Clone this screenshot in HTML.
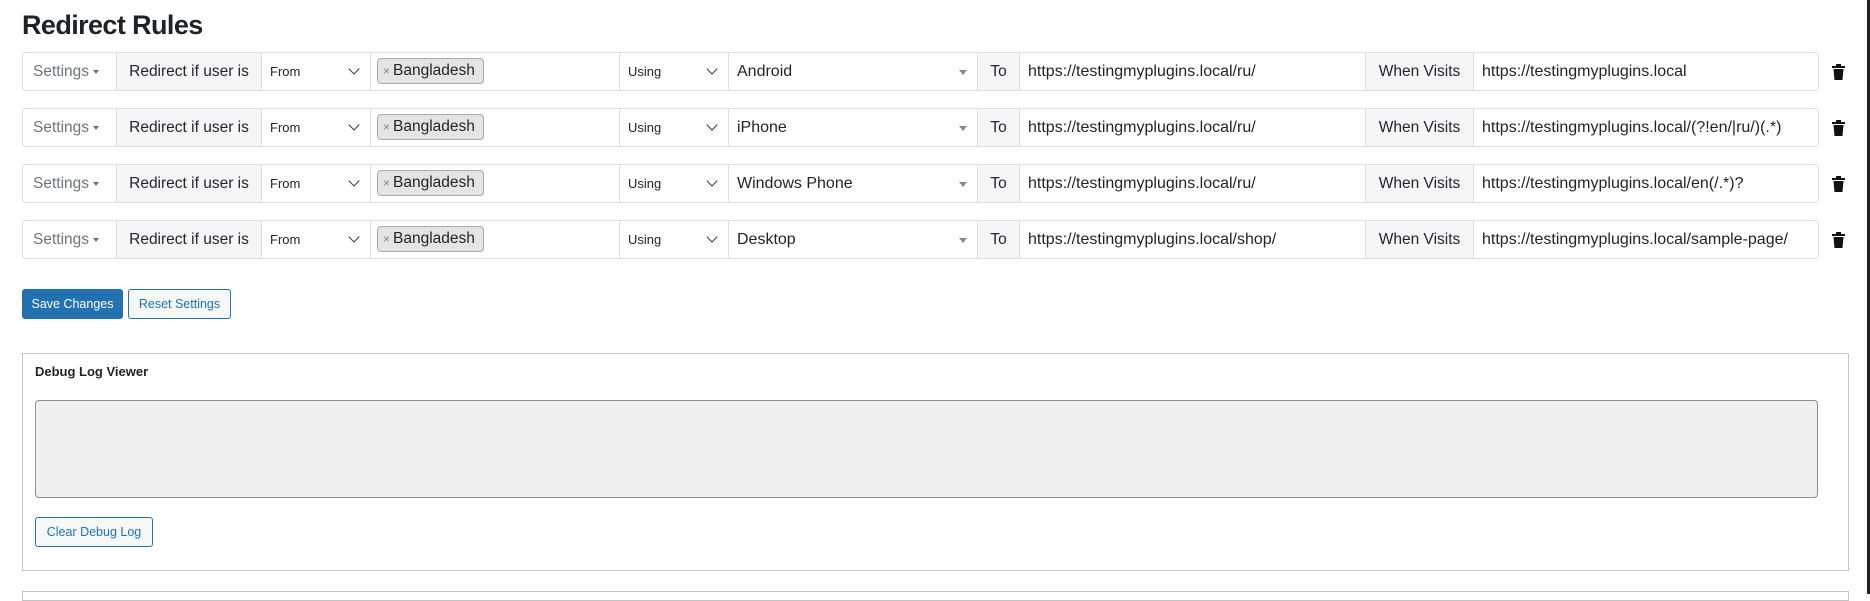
<!DOCTYPE html>
<html><head><meta charset="utf-8"><style>
*{box-sizing:border-box;margin:0;padding:0}
body{width:1870px;height:594px;background:#fff;font-family:"Liberation Sans",sans-serif;color:#212529;position:relative;overflow:hidden}
h1{position:absolute;left:22px;top:10px;font-size:27px;font-weight:600;color:#1d2327;letter-spacing:-0.6px}
.row{position:absolute;left:22px;width:1797px;height:39px;border:1px solid #dcdfe3;border-radius:4px}
.c{position:absolute;top:0;height:37px;display:flex;align-items:center;font-size:15.5px;color:#212529;white-space:nowrap;border-right:1px solid #dcdfe3}
.in{font-size:16px}
.ad{background:#f5f6f8;justify-content:center}
.sm{font-size:13px}
.chev{position:absolute;right:12px;top:12px;width:8px;height:8px;border-right:1.5px solid #333;border-bottom:1.5px solid #333;transform:rotate(45deg)}
.tri{position:absolute;right:10px;top:17px;border-left:4px solid transparent;border-right:4px solid transparent;border-top:5px solid #888}
.chip{position:absolute;left:6px;top:5px;height:26px;width:107px;background:#e4e4e4;border:1px solid #aaa;border-radius:4px;font-size:15.5px;display:flex;align-items:center;padding-left:5px}
.chip b{font-weight:normal;color:#888;font-size:12px;margin-right:3px}
.trash{position:absolute;left:1832px}
.btn{position:absolute;top:289px;height:30px;border-radius:3px;font-size:12.5px;display:flex;align-items:center;justify-content:center}
</style></head><body>
<h1>Redirect Rules</h1>

<div id="rows"></div>
<script>
var d=[["Android","https://testingmyplugins.local/ru/","https://testingmyplugins.local"],
["iPhone","https://testingmyplugins.local/ru/","https://testingmyplugins.local/(?!en/|ru/)(.*)"],
["Windows Phone","https://testingmyplugins.local/ru/","https://testingmyplugins.local/en(/.*)?"],
["Desktop","https://testingmyplugins.local/shop/","https://testingmyplugins.local/sample-page/"]];
var h="";
d.forEach(function(r,i){var y=52+i*56;
h+='<div class="row" style="top:'+y+'px">'+
'<div class="c" style="left:0;width:94px;color:#6c757d;padding-left:10px">Settings<span style="display:inline-block;margin-left:4px;border-left:3px solid transparent;border-right:3px solid transparent;border-top:4px solid #6c757d"></span></div>'+
'<div class="c ad" style="left:94px;width:145px">Redirect if user is</div>'+
'<div class="c sm" style="left:239px;width:109px;padding-left:8px">From<span class="chev"></span></div>'+
'<div class="c" style="left:348px;width:249px"><div class="chip"><b>×</b>Bangladesh</div></div>'+
'<div class="c sm" style="left:597px;width:109px;padding-left:8px">Using<span class="chev"></span></div>'+
'<div class="c in" style="left:706px;width:249px;padding-left:8px">'+r[0]+'<span class="tri"></span></div>'+
'<div class="c ad" style="left:955px;width:42px">To</div>'+
'<div class="c in" style="left:997px;width:346px;padding-left:8px">'+r[1]+'</div>'+
'<div class="c ad" style="left:1343px;width:108px">When Visits</div>'+
'<div class="c in" style="left:1451px;width:344px;padding-left:8px;border-right:none">'+r[2]+'</div>'+
'</div>'+
'<svg class="trash" style="top:'+(y+12)+'px" width="13" height="16" viewBox="0 0 13 16"><rect x="0" y="2" width="13" height="2" fill="#111"/><rect x="4" y="0" width="5" height="3" fill="#111"/><path d="M1.5 5h10l-1 11h-8z" fill="#111"/></svg>';});
document.getElementById("rows").innerHTML=h;
</script>

<div class="btn" style="left:22px;width:101px;background:#2271b1;color:#fff;border:1px solid #2271b1">Save Changes</div>
<div class="btn" style="left:128px;width:103px;background:#f6f7f7;color:#2271b1;border:1px solid #2271b1">Reset Settings</div>

<div style="position:absolute;left:22px;top:353px;width:1827px;height:218px;border:1px solid #c3c4c7"></div>
<div style="position:absolute;left:35px;top:364px;font-size:13px;font-weight:bold;color:#1d2327">Debug Log Viewer</div>
<div style="position:absolute;left:35px;top:400px;width:1783px;height:98px;background:#f0f0f1;border:1px solid #8c8f94;border-radius:4px"></div>
<div class="btn" style="left:35px;top:517px;width:118px;background:#f6f7f7;color:#2271b1;border:1px solid #2271b1">Clear Debug Log</div>
<div style="position:absolute;left:22px;top:591px;width:1827px;height:10px;border:1px solid #c3c4c7"></div>
<div style="position:absolute;left:1867px;top:0;width:3px;height:594px;background:#222"></div>
</body></html>
